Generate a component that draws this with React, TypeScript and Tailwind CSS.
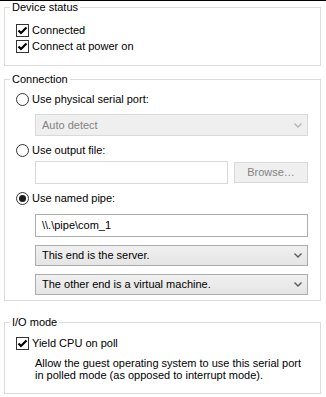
import type { ReactNode } from "react";

function CheckBox({ label }: { label: string }) {
  return (
    <div className="flex items-center h-[13px] gap-[3px]">
      <span className="w-[13px] h-[13px] border border-[#333333] bg-white flex items-center justify-center shrink-0">
        <svg width="11" height="11" viewBox="0 0 11 11">
          <path d="M1.5 5.5 L4 8 L9.5 2.5" fill="none" stroke="#000" strokeWidth="2.2" />
        </svg>
      </span>
      <span>{label}</span>
    </div>
  );
}

function Radio({ label, checked }: { label: string; checked?: boolean }) {
  return (
    <div className="flex items-center h-[13px] gap-[3px]">
      <span className="w-[13px] h-[13px] rounded-full border border-[#333333] bg-white flex items-center justify-center shrink-0">
        {checked && <span className="w-[7px] h-[7px] rounded-full bg-[#1a1a1a]" />}
      </span>
      <span>{label}</span>
    </div>
  );
}

function Chevron({ color }: { color: string }) {
  return (
    <svg width="8" height="5" viewBox="0 0 8 5">
      <path d="M0.5 0.5 L4 4 L7.5 0.5" fill="none" stroke={color} strokeWidth="1.4" />
    </svg>
  );
}

function Select({ value, disabled, h }: { value: string; disabled?: boolean; h: string }) {
  return (
    <div
      className={`ml-[19px] w-[273px] ${h} flex items-center justify-between pl-[6px] pr-[5px] border ${
        disabled
          ? "border-[#d9d9d9] bg-[#efefef] text-[#838383]"
          : "border-[#acacac] bg-gradient-to-b from-[#f0f0f0] to-[#e5e5e5] text-black"
      }`}
    >
      <span>{value}</span>
      <Chevron color={disabled ? "#b5b5b5" : "#5a5a5a"} />
    </div>
  );
}

function Group({ title, className, children }: { title: string; className: string; children: ReactNode }) {
  return (
    <fieldset className={`w-[317px] border border-[#dcdcdc] ${className}`}>
      <legend className="ml-[5px] px-[2px] leading-[13px]">{title}</legend>
      {children}
    </fieldset>
  );
}

export default function App() {
  return (
    <div className="w-[326px] h-[397px] bg-white border-t border-black px-[4px] text-[11px] leading-[13px] text-black font-['Liberation_Sans',Arial,sans-serif]">
      <Group title="Device status" className="">
        <div className="flex flex-col gap-[3px] pl-[11px] pt-[10px] pb-[12px]">
          <CheckBox label="Connected" />
          <CheckBox label="Connect at power on" />
        </div>
      </Group>

      <Group title="Connection" className="mt-[7px]">
        <div className="flex flex-col pl-[11px] pt-[7px] pb-[5px]">
          <Radio label="Use physical serial port:" />
          <div className="mt-[8px]">
            <Select value="Auto detect" disabled h="h-[22px]" />
          </div>
          <div className="mt-[8px]">
            <Radio label="Use output file:" />
          </div>
          <div className="mt-[4px] ml-[19px] flex gap-[6px]">
            <div className="w-[193px] h-[23px] border border-[#d9d9d9] bg-white" />
            <div className="mt-[1px] w-[74px] h-[21px] border border-[#d9d9d9] bg-[#efefef] text-[#838383] flex items-center justify-center">
              Browse…
            </div>
          </div>
          <div className="mt-[8px]">
            <Radio label="Use named pipe:" checked />
          </div>
          <div className="mt-[9px] ml-[19px] w-[273px] h-[23px] border border-[#acacac] bg-white flex items-center pl-[6px]">
            {"\\\\.\\pipe\\com_1"}
          </div>
          <div className="mt-[8px]">
            <Select value="This end is the server." h="h-[21px]" />
          </div>
          <div className="mt-[8px]">
            <Select value="The other end is a virtual machine." h="h-[21px]" />
          </div>
        </div>
      </Group>

      <Group title="I/O mode" className="mt-[15px]">
        <div className="pl-[11px] pt-[8px] pb-[12px]">
          <CheckBox label="Yield CPU on poll" />
          <p className="mt-[7px] ml-[19px] leading-[12px]">
            Allow the guest operating system to use this serial port
            <br />
            in polled mode (as opposed to interrupt mode).
          </p>
        </div>
      </Group>
    </div>
  );
}
